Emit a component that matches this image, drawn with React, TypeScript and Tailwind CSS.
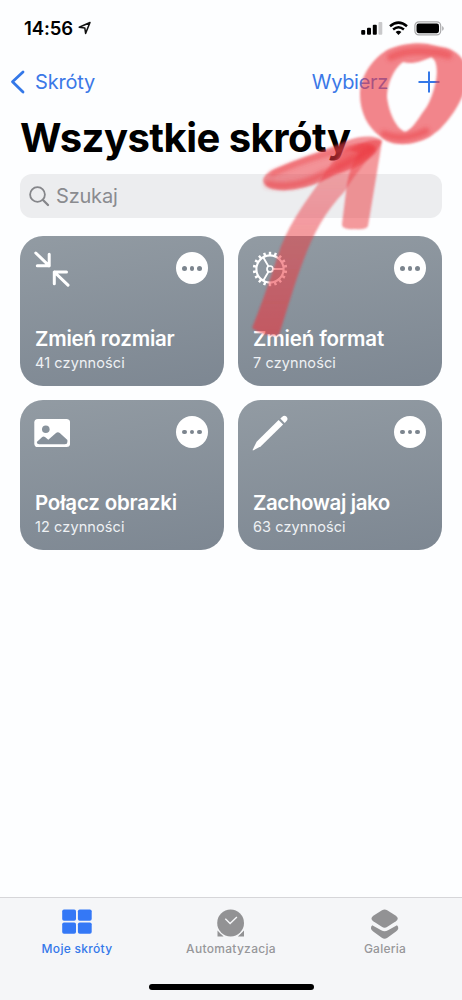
import React from "react";

const gearTeeth = Array.from({ length: 18 }, (_, i) => i * 20);

function ShrinkIcon() {
  return (
    <svg width="36" height="36" viewBox="0 0 36 36" fill="none" stroke="#fff" strokeWidth="3" strokeLinecap="round" strokeLinejoin="round">
      <path d="M1.8 2 15.2 14.8M15.2 3.3V14.8H3.3" />
      <path d="M34 34.2 20.3 21M20.3 32.8V21H32.5" />
    </svg>
  );
}

function GearIcon() {
  return (
    <svg width="36" height="36" viewBox="0 0 36 36" fill="none" stroke="#fff">
      <circle cx="18" cy="18" r="13.6" strokeWidth="2.1" />
      <circle cx="18" cy="18" r="3" strokeWidth="1.7" />
      <path d="M21 18H31.5M16.5 15.4 11.2 6.2M16.5 20.6 11.2 29.8" strokeWidth="1.9" />
      {gearTeeth.map((a) => (
        <path key={a} d="M31.5 18H35.2" strokeWidth="2.4" strokeLinecap="butt" transform={`rotate(${a + 10} 18 18)`} />
      ))}
    </svg>
  );
}

function PhotoIcon() {
  return (
    <svg width="36" height="36" viewBox="0 0 36 36">
      <rect x="0.3" y="4" width="35.8" height="28" rx="3.6" fill="#fff" />
      <circle cx="11.8" cy="14.3" r="3.8" fill="#89939c" />
      <path d="M2.8 27 8.2 22Q9.6 20.8 11 22L14.3 24.7 22 18Q23.9 16.6 25.8 18L33.4 25V27Q33.4 29.3 31 29.3H5.2Q2.8 29.3 2.8 27Z" fill="#87919b" />
    </svg>
  );
}

function PencilIcon() {
  return (
    <svg width="36" height="36" viewBox="0 0 36 36" fill="#fff">
      <path d="M26.6 5 31.1 9.4 8.9 31.2 1.5 35.3Q.3 35.8.8 34.5L4.6 26.8Z" />
      <path d="M28.3 3.6 30 1.9Q32.2-.2 34.4 1.5 36.6 4 34.5 6.1L32.7 7.9Z" />
    </svg>
  );
}

type CardProps = { icon: React.ReactNode; title: string; count: string; titleClass: string };

function ShortcutCard({ icon, title, count, titleClass }: CardProps) {
  return (
    <article className="flex h-[150px] flex-col justify-between rounded-[23px] bg-linear-[170deg,#929ba3,#7d8792] pt-[15px] pr-4 pb-[14px] pl-[14px] text-white">
      <div className="flex items-start justify-between">
        {icon}
        <button className="mt-[1px] flex size-8 items-center justify-center gap-[3.2px] rounded-full bg-white">
          <span className="size-[4.3px] rounded-full bg-[#7c858e]" />
          <span className="size-[4.3px] rounded-full bg-[#7c858e]" />
          <span className="size-[4.3px] rounded-full bg-[#7c858e]" />
        </button>
      </div>
      <div className="pl-px whitespace-nowrap">
        <h2 className={"text-[20.5px] leading-[26px] font-semibold " + titleClass}>{title}</h2>
        <p className="mt-[2px] text-[14.5px] leading-[18px] tracking-[0.1px] text-[#eef1f4]">{count}</p>
      </div>
    </article>
  );
}

function StatusBar() {
  return (
    <div className="flex h-[56px] items-center justify-between pr-[18px] pl-[24px]">
      <div className="flex items-center gap-[5px]">
        <span className="text-[18.5px] leading-6 font-semibold tracking-[-0.1px]">14:56</span>
        <svg width="14" height="14" viewBox="0 0 14 14" fill="none" stroke="#111" strokeWidth="1.5" strokeLinejoin="round">
          <path d="M12 1.5 1.2 6.2 6.8 6.9 7.6 12.4Z" />
        </svg>
      </div>
      <div className="flex items-center gap-[6px]">
        <svg width="22" height="14" viewBox="0 0 22 14">
          <rect x="0.2" y="9" width="4" height="4.7" rx="1" />
          <rect x="6" y="6.8" width="4" height="6.9" rx="1" />
          <rect x="11.8" y="3.8" width="4" height="9.9" rx="1" />
          <rect x="17.5" y="1" width="3.8" height="12.7" rx="1" fill="#c9c9cb" />
        </svg>
        <svg width="19" height="14" viewBox="0 0 19 14" fill="none" stroke="#000" strokeWidth="2.5">
          <path d="M1 5.2Q9.5-2 18 5.2M4.1 8.5Q9.5 4 14.9 8.5" />
          <path d="M6.6 11Q9.5 8.7 12.4 11L9.5 13.9Z" fill="#000" stroke="none" />
        </svg>
        <svg width="30" height="15" viewBox="0 0 30 15">
          <rect x="0.9" y="0.9" width="25.8" height="13" rx="3.9" fill="none" stroke="#a9a9ab" strokeWidth="1.2" />
          <rect x="2.5" y="2.6" width="22.5" height="9.6" rx="2.1" />
          <path d="M28.2 5Q29.7 5.6 29.7 7.4T28.2 9.8Z" fill="#a9a9ab" />
        </svg>
      </div>
    </div>
  );
}

function Annotation() {
  return (
    <svg className="pointer-events-none absolute top-0 left-0" width="462" height="350" viewBox="0 0 462 350">
      <defs>
        <filter id="soft" x="-5%" y="-5%" width="110%" height="110%">
          <feGaussianBlur stdDeviation="0.9" />
        </filter>
        <filter id="softer" x="-20%" y="-20%" width="140%" height="140%">
          <feGaussianBlur stdDeviation="2" />
        </filter>
        <linearGradient id="shaft" x1="0" y1="1" x2="0" y2="0">
          <stop offset="0" stopColor="#e8363f" stopOpacity=".62" />
          <stop offset=".5" stopColor="#eb3b43" stopOpacity=".52" />
          <stop offset="1" stopColor="#eb3b43" stopOpacity=".4" />
        </linearGradient>
      </defs>
      <g filter="url(#soft)" fill="#eb3b43">
        <path fillRule="evenodd" fillOpacity=".62" d="M428 44C415 42 398 45 387 50C371 60 360 77 360 95C360 112 368 128 380 136C389 145 404 146 417 142C427 140 434 134 440 129C450 119 459 106 464 92V62C459 52 449 48 441 47ZM403 62C412 65 423 61 431 57C438 60 438 75 435 85C432 97 428 106 423 112C417 121 411 130 405 132C397 129 389 114 387 97C387 84 394 68 403 62Z" />
        <path fill="url(#shaft)" d="M252 328C260 308 269 283 277 258C286 228 303 205 318 184Q331 160 350 146Q366 138 376 149C365 163 352 178 345 191C324 213 313 235 304 259C295 282 287 310 279 335C269 337 259 333 252 328Z" />
        <path fillOpacity=".52" d="M350 150Q369 137 382 141Q379 160 375 184L368 226Q366 230 355 229Q341 230 342 224L347 184Q350 166 359 153Z" />
        <path fillOpacity=".55" d="M382 141C379 136 363 134 346 141C326 150 303 157 284 165C270 170 263 175 263 181C265 188 276 191 287 190C305 189 320 183 334 175C352 169 374 162 382 141Z" />
      </g>
      <g filter="url(#softer)" fill="none" stroke="#eb3b43" strokeLinecap="round">
        <path d="M391 57Q408 49 430 52Q440 52 448 55" strokeWidth="8" strokeOpacity=".5" />
        <path d="M384 134Q403 142 426 131" strokeWidth="7" strokeOpacity=".5" />
        <path d="M268 184Q295 190 323 174Q350 165 371 149" strokeWidth="7" strokeOpacity=".5" />
        <path d="M272 174Q300 161 330 153Q352 146 373 147" strokeWidth="5" strokeOpacity=".45" />
        <path d="M338 165Q355 154 372 151" strokeWidth="8" strokeOpacity=".3" />
      </g>
    </svg>
  );
}

function TabBar() {
  return (
    <footer className="mt-auto flex h-[103px] flex-col border-t border-[#d6d6d9] bg-[#f5f6f8] text-[12px] font-medium text-[#97979a]">
      <nav className="grid h-[72px] grid-cols-3 pt-[9px]">
        <a className="flex flex-col items-center text-[#3478ea]">
          <svg width="32" height="34" viewBox="0 0 32 34" fill="#3478f6">
            <rect x="1.2" y="2.5" width="13.8" height="11.3" rx="1.8" />
            <rect x="16.9" y="2.5" width="13.8" height="11.3" rx="1.8" />
            <rect x="1.2" y="15.5" width="13.8" height="11.3" rx="1.8" />
            <rect x="16.9" y="15.5" width="13.8" height="11.3" rx="1.8" />
          </svg>
          <span className="leading-4 tracking-[0.3px]">Moje skróty</span>
        </a>
        <a className="flex flex-col items-center">
          <svg width="32" height="34" viewBox="0 0 32 34" fill="#929294">
            <path d="M2.5 23.5 8.6 29.5H2.5ZM29 23.5V29.5H22.9Z" />
            <circle cx="15.6" cy="16" r="14.4" fill="#f5f6f8" />
            <circle cx="15.6" cy="16" r="13.4" />
            <path d="M10.3 11.8 15.1 16.6 21.9 9.9" fill="none" stroke="#f5f6f8" strokeWidth="1.4" />
          </svg>
          <span className="leading-4 tracking-[0.3px]">Automatyzacja</span>
        </a>
        <a className="flex flex-col items-center">
          <svg width="32" height="34" viewBox="0 0 32 34" fill="#929294">
            <path d="M13 3.2Q15.6 1.6 18.2 3.2L26.9 8.7Q30.6 11.5 26.9 14.2L18.4 19.8Q15.6 21.5 12.8 19.8L4.3 14.2Q.6 11.5 4.3 8.7Z" />
            <path d="M3.2 18.2 12.2 23.2Q15.6 25.1 19 23.2L28 18.2Q31 21.4 27 24.4L18.4 30.8Q15.6 32.8 12.8 30.8L4.2 24.4Q.2 21.4 3.2 18.2Z" />
          </svg>
          <span className="leading-4 tracking-[0.25px]">Galeria</span>
        </a>
      </nav>
      <div className="mt-[14px] ml-[149px] h-[6px] w-[165px] rounded-full bg-black" />
    </footer>
  );
}

export default function App() {
  return (
    <div className="relative flex h-[1000px] w-[462px] flex-col overflow-hidden bg-[#fdfeff] font-['Inter',sans-serif] text-black">
      <StatusBar />
      <header className="flex h-[51px] items-center pr-[22px] pl-[10px] text-[20px] leading-6 text-[#3b78e7]">
        <svg width="16" height="24" viewBox="0 0 16 24" fill="none" stroke="#3478e8" strokeWidth="2.8" strokeLinecap="round" strokeLinejoin="round">
          <path d="M13 2 2.5 11.8 13 22" />
        </svg>
        <span className="ml-[9px] tracking-[-0.2px]">Skróty</span>
        <span className="ml-auto tracking-[-0.3px]">Wybierz</span>
        <svg className="ml-[30px]" width="22" height="22" viewBox="0 0 22 22" fill="none" stroke="#3478e8" strokeWidth="2">
          <path d="M11 .5V21.5M.5 11H21.5" />
        </svg>
      </header>
      <main className="px-5">
        <h1 className="mt-[7px] text-[40px] leading-[48px] font-bold tracking-[-0.53px] whitespace-nowrap">Wszystkie skróty</h1>
        <div className="mt-[12px] flex h-[44px] items-center rounded-[12px] bg-[#ecedef] pl-[9px] text-[20px] text-[#8a8b8f]">
          <svg width="21" height="21" viewBox="0 0 21 21" fill="none" stroke="#85868a" strokeWidth="1.8" strokeLinecap="round">
            <circle cx="8.5" cy="8.5" r="7.4" />
            <path d="m14 14 5 5" strokeWidth="2.3" />
          </svg>
          <span className="ml-[6px] tracking-[-0.2px]">Szukaj</span>
        </div>
        <section className="mt-[18.4px] grid grid-cols-2 gap-x-[14px] gap-y-[13.8px]">
          <ShortcutCard icon={<ShrinkIcon />} title="Zmień rozmiar" count="41 czynności" titleClass="tracking-[-0.2px]" />
          <ShortcutCard icon={<GearIcon />} title="Zmień format" count="7 czynności" titleClass="tracking-[-0.15px]" />
          <ShortcutCard icon={<PhotoIcon />} title="Połącz obrazki" count="12 czynności" titleClass="tracking-[-0.2px]" />
          <ShortcutCard icon={<PencilIcon />} title="Zachowaj jako" count="63 czynności" titleClass="tracking-[-0.4px]" />
        </section>
      </main>
      <TabBar />
      <Annotation />
    </div>
  );
}
